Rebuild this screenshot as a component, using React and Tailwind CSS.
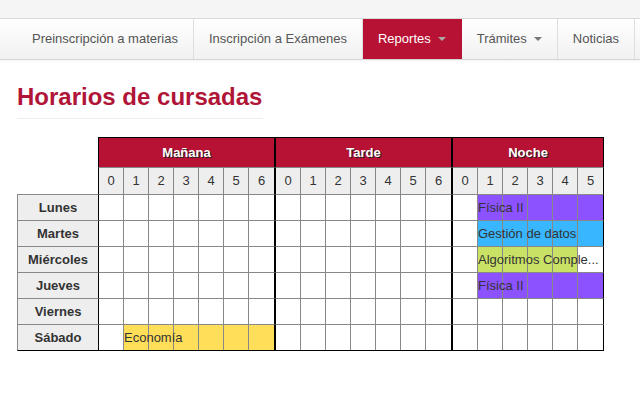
import React from 'react';

const groups = [
  { name: 'Mañana', cols: 7 },
  { name: 'Tarde', cols: 7 },
  { name: 'Noche', cols: 6 },
];

const days = ['Lunes', 'Martes', 'Miércoles', 'Jueves', 'Viernes', 'Sábado'];

const colors = {
  purple: 'bg-[#8c52ff]',
  blue: 'bg-[#38b6ff]',
  lime: 'bg-[#c9e265]',
  yellow: 'bg-[#ffde59]',
};

const clases = [
  { day: 'Lunes', group: 'Noche', from: 1, to: 5, label: 'Física II', color: 'purple' },
  { day: 'Martes', group: 'Noche', from: 1, to: 5, label: 'Gestión de datos', color: 'blue' },
  { day: 'Miércoles', group: 'Noche', from: 1, to: 4, label: 'Algoritmos Comple...', color: 'lime' },
  { day: 'Jueves', group: 'Noche', from: 1, to: 5, label: 'Física II', color: 'purple' },
  { day: 'Sábado', group: 'Mañana', from: 1, to: 6, label: 'Economía', color: 'yellow' },
];

const navItems = [
  { label: 'Preinscripción a materias' },
  { label: 'Inscripción a Exámenes' },
  { label: 'Reportes', caret: true, active: true },
  { label: 'Trámites', caret: true },
  { label: 'Noticias' },
];

function Caret({ light }) {
  return (
    <span
      className={`ml-[7px] inline-block w-0 h-0 border-x-[4px] border-x-transparent border-t-[4px] ${
        light ? 'border-t-[#a9a9a9]' : 'border-t-[#777]'
      }`}
    />
  );
}

function Navbar() {
  return (
    <div>
      <div className="h-[19px] bg-[#f5f5f5] border-b border-[#dcdcdc]" />
      <div className="h-[41px] bg-gradient-to-b from-white to-[#f1f1f1] border-b border-[#d4d4d4] shadow-[0_1px_3px_rgba(0,0,0,0.06)] pl-[17px] flex">
        {navItems.map((item) => (
          <div
            key={item.label}
            className={`h-full px-[15px] flex items-center text-[13px] border-r ${
              item.active
                ? 'bg-[#b71234] text-white border-[#b71234]'
                : 'text-[#555] border-[#dedede]'
            }`}
          >
            {item.label}
            {item.caret && <Caret light={item.active} />}
          </div>
        ))}
      </div>
    </div>
  );
}

function Cell({ block, index, cols }) {
  const inBlock = block && index >= block.from && index <= block.to;
  return (
    <div
      className={`relative w-[25px] h-full ${index === cols - 1 ? '' : 'border-r border-[#888]'} ${
        inBlock ? colors[block.color] : 'bg-white'
      }`}
    >
      {block && index === block.from && (
        <span
          className="absolute left-0 top-0 h-full z-10 flex items-center text-[13px] text-[#333] whitespace-nowrap"
          style={{ width: (cols - block.from) * 25 }}
        >
          {block.label}
        </span>
      )}
    </div>
  );
}

function Horario() {
  return (
    <div className="text-[13px]">
      {/* turnos */}
      <div className="flex">
        <div className="w-[81px]" />
        {groups.map((g) => (
          <div
            key={g.name}
            className="h-[31px] bg-[#b71234] border-t border-x border-t-black border-x-black border-b border-b-[#888] flex items-center justify-center text-white font-bold [text-shadow:1px_1px_0_#222]"
            style={{ width: g.cols * 25 + 2 }}
          >
            {g.name}
          </div>
        ))}
      </div>

      {/* horas */}
      <div className="flex h-[27px]">
        <div className="w-[81px] border-b border-[#888]" />
        {groups.map((g) => (
          <div key={g.name} className="flex border-x border-black border-b border-b-[#888]">
            {Array.from({ length: g.cols }, (_, i) => (
              <div
                key={i}
                className={`w-[25px] h-full bg-[#eee] text-[#333] flex items-center justify-center ${
                  i === g.cols - 1 ? '' : 'border-r border-[#888]'
                }`}
              >
                {i}
              </div>
            ))}
          </div>
        ))}
      </div>

      {/* dias */}
      {days.map((day, d) => {
        const lastRow = d === days.length - 1;
        const rowBorder = lastRow ? 'border-b border-b-black' : 'border-b border-b-[#888]';
        return (
          <div key={day} className="flex h-[26px]">
            <div
              className={`w-[81px] bg-[#eee] border-l border-l-[#888] ${rowBorder} flex items-center justify-center font-bold text-[#333]`}
            >
              {day}
            </div>
            {groups.map((g) => {
              const block = clases.find((c) => c.day === day && c.group === g.name);
              return (
                <div key={g.name} className={`flex border-x border-x-black ${rowBorder}`}>
                  {Array.from({ length: g.cols }, (_, i) => (
                    <Cell key={i} block={block} index={i} cols={g.cols} />
                  ))}
                </div>
              );
            })}
          </div>
        );
      })}
    </div>
  );
}

export default function App() {
  return (
    <div className="w-[640px] h-[400px] bg-white font-['Liberation_Sans',Arial,sans-serif] overflow-hidden">
      <Navbar />
      <div className="px-[17px]">
        <h1 className="mt-[22px] w-[246px] text-[24px] leading-[29px] font-bold text-[#b01538] pb-[7px] border-b border-[#eee]">
          Horarios de cursadas
        </h1>
        <div className="mt-[18px]">
          <Horario />
        </div>
      </div>
    </div>
  );
}
